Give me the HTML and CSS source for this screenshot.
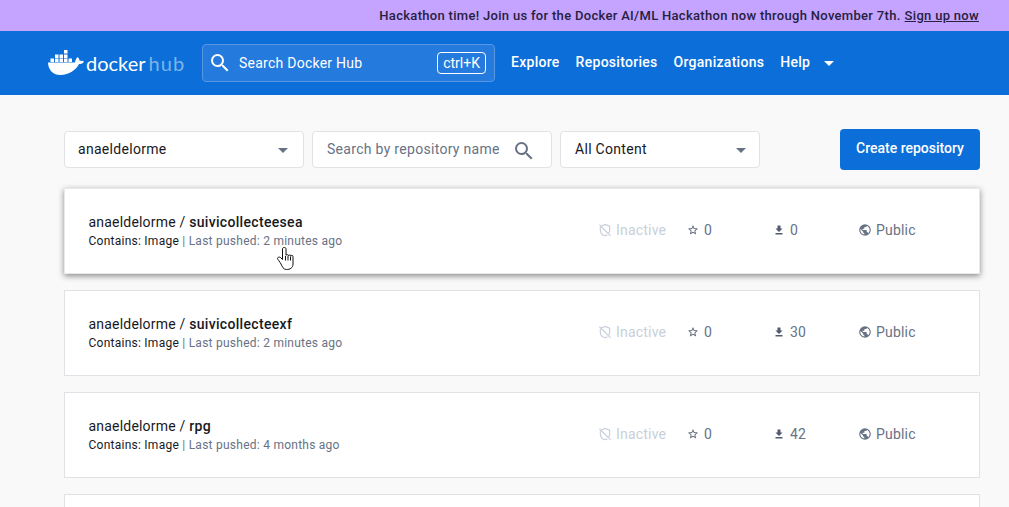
FILE: index.html
```html
<!DOCTYPE html>
<html lang="en">
<head>
    <meta charset="UTF-8">
    <meta name="viewport" content="width=device-width, initial-scale=1.0">
    <title>Docker Hub</title>
    <link rel="stylesheet" href="styles.css">
</head>
<body>

<div class="banner">
    <span>Hackathon time! Join us for the Docker AI/ML Hackathon now through November 7th.</span>
    <a href="#">Sign up now</a>
</div>

<header class="topbar">
    <a class="logo" href="#">
        <svg class="whale" width="36" height="25" viewBox="0 0 36 25">
            <path fill="#fff" d="M0 12.500H27c.3-2 1.200-4 2.500-5.500 1.300 1 2 2.500 2.300 4 1.300-.4 3-.3 4.200.5-1 2-3 2.700-5 2.600C28 20 21 25 12.500 25 4 25 .3 19 0 12.500z"/>
            <path fill="#fff" d="M2.500 8.500H6V12H2.500zM7 8.500h3.500V12H7zM11.500 8.500H15V12h-3.500zM16 8.500h3.500V12H16zM20.500 8.500H24V12h-3.500zM7 4.500h3.500V8H7zM11.500 4.500H15V8h-3.500zM16 4.500h3.500V8H16zM16 0h3.500v3.500H16z"/>
        </svg>
        <span class="logo-docker">docker</span><span class="logo-hub">hub</span>
    </a>
    <div class="global-search">
        <svg width="24" height="24" viewBox="0 0 24 24"><use href="#i-search" fill="#fff"/></svg>
        <span class="global-search-text">Search Docker Hub</span>
        <span class="shortcut">ctrl+K</span>
    </div>
    <nav class="nav">
        <a href="#">Explore</a>
        <a href="#">Repositories</a>
        <a href="#">Organizations</a>
        <a href="#">Help</a>
        <span class="nav-caret"></span>
    </nav>
</header>

<main class="content">
    <div class="filters">
        <div class="field field-owner">
            <span class="field-text">anaeldelorme</span>
            <span class="caret"></span>
        </div>
        <div class="field field-search">
            <span class="field-text placeholder">Search by repository name</span>
            <svg class="field-icon" width="24" height="24" viewBox="0 0 24 24"><use href="#i-search" fill="#677285"/></svg>
        </div>
        <div class="field field-content">
            <span class="field-text">All Content</span>
            <span class="caret"></span>
        </div>
        <button class="create-btn">Create repository</button>
    </div>

    <div class="repo repo-hover">
        <div class="repo-info">
            <div class="repo-name">anaeldelorme / <b>suivicollecteesea</b></div>
            <div class="repo-meta">Contains: Image <i>| Last pushed: 2 minutes ago</i></div>
        </div>
        <div class="stat stat-status">
            <svg width="14" height="14" viewBox="0 0 24 24"><use href="#i-inactive"/></svg>Inactive
        </div>
        <div class="stat stat-stars">
            <svg width="12" height="12" viewBox="0 0 24 24"><use href="#i-star"/></svg>0
        </div>
        <div class="stat stat-pulls">
            <svg width="12" height="12" viewBox="0 0 24 24"><use href="#i-pull"/></svg>0
        </div>
        <div class="stat stat-vis">
            <svg width="14" height="14" viewBox="0 0 24 24"><use href="#i-globe"/></svg>Public
        </div>
    </div>

    <div class="repo">
        <div class="repo-info">
            <div class="repo-name">anaeldelorme / <b>suivicollecteexf</b></div>
            <div class="repo-meta">Contains: Image <i>| Last pushed: 2 minutes ago</i></div>
        </div>
        <div class="stat stat-status">
            <svg width="14" height="14" viewBox="0 0 24 24"><use href="#i-inactive"/></svg>Inactive
        </div>
        <div class="stat stat-stars">
            <svg width="12" height="12" viewBox="0 0 24 24"><use href="#i-star"/></svg>0
        </div>
        <div class="stat stat-pulls">
            <svg width="12" height="12" viewBox="0 0 24 24"><use href="#i-pull"/></svg>30
        </div>
        <div class="stat stat-vis">
            <svg width="14" height="14" viewBox="0 0 24 24"><use href="#i-globe"/></svg>Public
        </div>
    </div>

    <div class="repo">
        <div class="repo-info">
            <div class="repo-name">anaeldelorme / <b>rpg</b></div>
            <div class="repo-meta">Contains: Image <i>| Last pushed: 4 months ago</i></div>
        </div>
        <div class="stat stat-status">
            <svg width="14" height="14" viewBox="0 0 24 24"><use href="#i-inactive"/></svg>Inactive
        </div>
        <div class="stat stat-stars">
            <svg width="12" height="12" viewBox="0 0 24 24"><use href="#i-star"/></svg>0
        </div>
        <div class="stat stat-pulls">
            <svg width="12" height="12" viewBox="0 0 24 24"><use href="#i-pull"/></svg>42
        </div>
        <div class="stat stat-vis">
            <svg width="14" height="14" viewBox="0 0 24 24"><use href="#i-globe"/></svg>Public
        </div>
    </div>

    <div class="repo"></div>
</main>

<!-- pointer sits over the first row -->
<svg class="cursor" width="19" height="24" viewBox="0 0 19 24">
    <path fill="#fff" stroke="#111" stroke-width="1" stroke-linejoin="round" d="M8 .5c-1 0-1.500.7-1.500 1.500v10.500L4.500 10.500c-1-.8-3-.3-3 1 0 .8 2.500 3.500 3.500 5.500s2 5.500 5.500 5.500c3.500 0 6.500-1.500 6.500-5.500V9.500c0-1.500-2-1.500-2-.3 0-1.500-2-1.700-2.500-.4 0-1.500-2-1.500-2.500-.5V2c0-.8-.5-1.500-1.500-1.500z"/>
    <path fill="none" stroke="#111" d="M9.500 9v4.500M12 9v4.500M14.500 9.500v4"/>
</svg>

<svg class="icon-defs" width="0" height="0">
    <defs>
        <path id="i-search" d="M15.500 14h-.79l-.28-.27A6.470 6.470 0 0 0 16 9.500 6.500 6.500 0 1 0 9.500 16c1.610 0 3.090-.59 4.230-1.570l.27.28v.79l5 4.990L20.490 19l-4.990-5zm-6 0C7.010 14 5 11.990 5 9.500S7.010 5 9.500 5 14 7.010 14 9.500 11.990 14 9.500 14z"/>
        <g id="i-inactive" fill="none" stroke="#c8cfda" stroke-width="2">
            <path d="M5 5.500l7-3 8 3v6c0 2.500-.6 4.500-1.800 6M16 20a15 15 0 0 1-4 1.800C7 20.500 4 16.500 4 11.500V7"/>
            <path d="M2.500 3l19 19"/>
        </g>
        <path id="i-star" fill="#505b6e" d="M22 9.240l-7.190-.62L12 2 9.190 8.630 2 9.240l5.460 4.730L5.820 21 12 17.270 18.180 21l-1.630-7.030L22 9.240zM12 15.400l-3.760 2.270 1-4.280-3.320-2.880 4.380-.38L12 6.100l1.710 4.040 4.380.38-3.320 2.880 1 4.280L12 15.400z"/>
        <path id="i-pull" fill="#505b6e" d="M19 9h-4V3H9v6H5l7 7 7-7zM5 18v3h14v-3H5z"/>
        <path id="i-globe" fill="#677285" d="M12 2a10 10 0 1 0 0 20 10 10 0 0 0 0-20zm-1 17.900A8 8 0 0 1 4.200 10.200L9 15v1c0 1.100.9 2 2 2v1.900zm6.900-2.500c-.3-.8-1-1.400-1.900-1.400h-1v-3c0-.6-.4-1-1-1H8v-2h2c.6 0 1-.4 1-1V7h2c1.100 0 2-.9 2-2v-.4a8 8 0 0 1 2.900 12.800z"/>
    </defs>
</svg>

</body>
</html>
```

FILE: styles.css
```css
* {
    box-sizing: border-box;
}
html, body {
    height: 100%;
}
body {
    margin: 0;
    overflow: hidden;
    font-family: Roboto, "Liberation Sans", sans-serif;
    font-size: 14px;
    background-color: #f9f9fa;
    color: #17191e;
}
a {
    color: inherit;
    text-decoration: none;
}

.banner {
    height: 31px;
    padding-right: 30px;
    display: flex;
    justify-content: flex-end;
    align-items: center;
    gap: 4px;
    background-color: #c4a4ff;
    color: #27203f;
    font-size: 13px;
    font-weight: 500;
    letter-spacing: 0.305px;
}
.banner a {
    text-decoration: underline;
}

.topbar {
    height: 64px;
    padding-left: 48px;
    display: flex;
    align-items: center;
    background-color: #0b6ed9;
    color: #fff;
}
.logo {
    width: 154px;
    display: flex;
    align-items: center;
}
.whale {
    flex: none;
    margin-right: 2px;
    margin-top: -2px;
}
.logo-docker, .logo-hub {
    font-family: Lato, sans-serif;
    font-size: 20px;
    font-weight: 400;
}
.logo-docker {
    color: #fff;
}
.logo-hub {
    margin-left: 3px;
    color: #7db4ea;
    letter-spacing: 1.1px;
}
.global-search {
    width: 293px;
    height: 38px;
    padding: 0 8px 0 5px;
    display: flex;
    align-items: center;
    background-color: #257ade;
    border: 1px solid #5897e4;
    border-radius: 4px;
}
.global-search-text {
    margin-left: 7px;
    flex: 1;
    letter-spacing: 0.25px;
}
.shortcut {
    height: 22px;
    padding: 0 5px;
    display: flex;
    align-items: center;
    border: 1px solid #fff;
    border-radius: 4px;
}
.nav {
    margin-left: 16px;
    padding-bottom: 2px;
    display: flex;
    align-items: center;
    gap: 16px;
    font-weight: 500;
    letter-spacing: 0.28px;
}
.nav-caret {
    margin-left: -2px;
    margin-top: 2px;
    border-left: 5px solid transparent;
    border-right: 5px solid transparent;
    border-top: 5px solid #fff;
}

.content {
    padding: 34px 29px 0 64px;
}
.filters {
    height: 41px;
    margin-bottom: 18px;
    display: flex;
    align-items: center;
    gap: 8px;
}
.field {
    height: 37px;
    padding: 0 15px 0 13px;
    display: flex;
    justify-content: space-between;
    align-items: center;
    background-color: #fff;
    border: 1px solid #e1e2e6;
    border-radius: 4px;
}
.field-text {
    padding-bottom: 2px;
    letter-spacing: 0.3px;
}
.field-owner {
    width: 240px;
}
.field-search {
    width: 240px;
    padding: 0 15px 0 14px;
}
.field-content {
    width: 200px;
    padding: 0 13px 0 14px;
}
.field-icon {
    margin-top: 3px;
}
.placeholder {
    color: #677285;
}
.caret {
    margin-top: 2px;
    border-left: 5px solid transparent;
    border-right: 5px solid transparent;
    border-top: 5px solid #677285;
}
.create-btn {
    width: 140px;
    height: 41px;
    margin-left: 72px;
    padding: 0 0 3px;
    background-color: #0b6ed9;
    color: #fff;
    border: 0;
    border-radius: 4px;
    font-family: inherit;
    font-size: 14px;
    font-weight: 500;
}

.repo {
    height: 86px;
    margin-bottom: 16px;
    padding-left: 23.5px;
    display: flex;
    align-items: center;
    background-color: #fff;
    border: 1px solid #e1e2e6;
    color: #677285;
}
.repo-hover {
    border-color: #e8e9ec;
    box-shadow: 0 2px 6px rgba(0, 0, 0, 0.45);
}
.repo-info {
    width: 509.5px;
}
.repo-name {
    color: #17191e;
    letter-spacing: 0.2px;
}
.repo-name b {
    font-weight: 500;
    letter-spacing: 0.32px;
}
.repo-meta {
    margin-top: 4px;
    font-size: 12px;
    letter-spacing: 0.25px;
    color: #17191e;
}
.repo-meta i {
    font-style: normal;
    color: #677285;
}
.stat {
    padding-bottom: 2px;
    display: flex;
    align-items: center;
    gap: 4px;
    letter-spacing: 0.2px;
}
.stat-status {
    width: 89px;
    color: #c8cfda;
}
.stat-stars {
    width: 86px;
}
.stat-pulls {
    width: 85px;
}
.stat-stars, .stat-pulls {
    gap: 5px;
}

.cursor {
    position: absolute;
    left: 276px;
    top: 247px;
}
.icon-defs {
    position: absolute;
}
```
